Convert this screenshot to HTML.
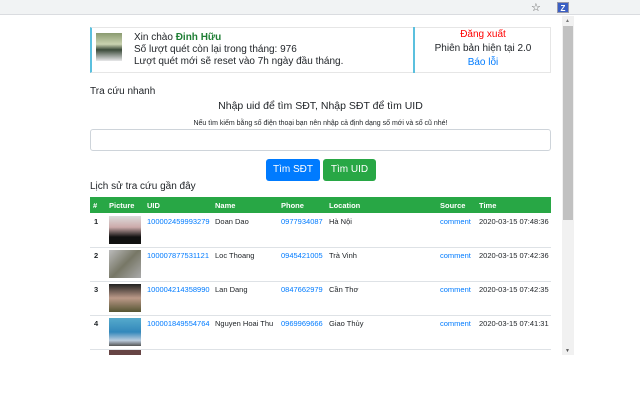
<!DOCTYPE html><html><head><meta charset="utf-8"><style>
*{margin:0;padding:0;box-sizing:border-box}
body{width:640px;height:400px;background:#fff;position:relative;overflow:hidden;font-family:"Liberation Sans","DejaVu Sans",sans-serif;color:#212529}
.a{position:absolute;white-space:nowrap}
.bar{left:0;top:0;width:640px;height:15px;background:#f1f3f4;border-bottom:1px solid #dadce0}
.blue{color:#007bff}
.th{font-weight:bold;color:#fff;font-size:7.5px}
.td{font-size:7.5px}
.row{left:90px;width:461px;height:1px;background:#dee2e6}
.img{width:32px;height:28px}
</style></head><body>
<div class="a bar"></div>
<div class="a" style="left:531px;top:1px;font-size:11px;color:#555">☆</div>
<div class="a" style="left:557px;top:2px;width:12px;height:11px;background:#3b5fc4;color:#fff;font-size:8px;font-weight:bold;text-align:center;line-height:11px;border:1px solid #99a">Z</div>
<!-- header card -->
<div class="a" style="left:90px;top:27px;width:461px;height:46px;border:1px solid #e6e6e6;border-left:2px solid #5bc0de"></div>
<div class="a" style="left:413px;top:27px;width:2px;height:46px;background:#5bc0de"></div>
<div class="a" style="left:96px;top:33px;width:26px;height:28px;background:linear-gradient(#8a9a70,#c9d2b0 40%,#3b4b3a 60%,#e8e8ea)"></div>
<div class="a" style="left:134px;top:32px;font-size:10px;line-height:12px">Xin chào <b style="color:#1e7e34">Đinh Hữu</b><br>Số lượt quét còn lại trong tháng: 976<br>Lượt quét mới sẽ reset vào 7h ngày đầu tháng.</div>
<div class="a" style="left:415px;top:28px;width:136px;text-align:center;font-size:10px;line-height:14px"><span style="color:#f00">Đăng xuất</span><br>Phiên bản hiện tại 2.0<br><span class="blue">Báo lỗi</span></div>
<div class="a" style="left:90px;top:86px;font-size:10px">Tra cứu nhanh</div>
<div class="a" style="left:90px;top:100px;width:461px;text-align:center;font-size:10.5px">Nhập uid để tìm SĐT, Nhập SĐT để tìm UID</div>
<div class="a" style="left:90px;top:120px;width:461px;text-align:center;font-size:7px">Nếu tìm kiếm bằng số điện thoại bạn nên nhập cả định dạng số mới và số cũ nhé!</div>
<div class="a" style="left:90px;top:129px;width:461px;height:22px;border:1px solid #ced4da;border-radius:3px"></div>
<div class="a" style="left:266px;top:159px;width:54px;height:22px;background:#007bff;border-radius:3px;color:#fff;font-size:10px;text-align:center;line-height:22px">Tìm SĐT</div>
<div class="a" style="left:323px;top:159px;width:53px;height:22px;background:#28a745;border-radius:3px;color:#fff;font-size:10px;text-align:center;line-height:22px">Tìm UID</div>
<div class="a" style="left:90px;top:181px;font-size:10px">Lịch sử tra cứu gần đây</div>
<div class="a" style="left:90px;top:197px;width:461px;height:16px;background:#28a745"></div>
<div class="a th" style="left:93px;top:201px">#</div>
<div class="a th" style="left:109px;top:201px">Picture</div>
<div class="a th" style="left:147px;top:201px">UID</div>
<div class="a th" style="left:215px;top:201px">Name</div>
<div class="a th" style="left:281px;top:201px">Phone</div>
<div class="a th" style="left:329px;top:201px">Location</div>
<div class="a th" style="left:440px;top:201px">Source</div>
<div class="a th" style="left:479px;top:201px">Time</div>

<div class="a img" style="left:109px;top:216px;background:linear-gradient(#ddd,#caa 40%,#111 75%)"></div>
<div class="a img" style="left:109px;top:250px;background:linear-gradient(135deg,#bbb,#776,#aaa)"></div>
<div class="a img" style="left:109px;top:284px;background:linear-gradient(#222,#b98 50%,#553)"></div>
<div class="a img" style="left:109px;top:318px;background:linear-gradient(#5ac,#38b 50%,#bcd 80%,#555)"></div>
<div class="a img" style="left:109px;top:350px;height:6px;background:#644"></div>
<div class="a row" style="top:247px"></div>
<div class="a row" style="top:281px"></div>
<div class="a row" style="top:315px"></div>
<div class="a row" style="top:349px"></div>

<div class="a td" style="left:94px;top:217px;font-weight:bold">1</div>
<div class="a td blue" style="left:147px;top:217px">100002459993279</div>
<div class="a td" style="left:215px;top:217px">Doan Dao</div>
<div class="a td blue" style="left:281px;top:217px">0977934087</div>
<div class="a td" style="left:329px;top:217px">Hà Nội</div>
<div class="a td blue" style="left:440px;top:217px">comment</div>
<div class="a td" style="left:479px;top:217px">2020-03-15 07:48:36</div>

<div class="a td" style="left:94px;top:251px;font-weight:bold">2</div>
<div class="a td blue" style="left:147px;top:251px">100007877531121</div>
<div class="a td" style="left:215px;top:251px">Loc Thoang</div>
<div class="a td blue" style="left:281px;top:251px">0945421005</div>
<div class="a td" style="left:329px;top:251px">Trà Vinh</div>
<div class="a td blue" style="left:440px;top:251px">comment</div>
<div class="a td" style="left:479px;top:251px">2020-03-15 07:42:36</div>

<div class="a td" style="left:94px;top:285px;font-weight:bold">3</div>
<div class="a td blue" style="left:147px;top:285px">100004214358990</div>
<div class="a td" style="left:215px;top:285px">Lan Dang</div>
<div class="a td blue" style="left:281px;top:285px">0847662979</div>
<div class="a td" style="left:329px;top:285px">Cần Thơ</div>
<div class="a td blue" style="left:440px;top:285px">comment</div>
<div class="a td" style="left:479px;top:285px">2020-03-15 07:42:35</div>

<div class="a td" style="left:94px;top:319px;font-weight:bold">4</div>
<div class="a td blue" style="left:147px;top:319px">100001849554764</div>
<div class="a td" style="left:215px;top:319px">Nguyen Hoai Thu</div>
<div class="a td blue" style="left:281px;top:319px">0969969666</div>
<div class="a td" style="left:329px;top:319px">Giao Thủy</div>
<div class="a td blue" style="left:440px;top:319px">comment</div>
<div class="a td" style="left:479px;top:319px">2020-03-15 07:41:31</div>

<div class="a" style="left:80px;top:355px;width:495px;height:45px;background:#fff"></div>
<!-- scrollbar -->
<div class="a" style="left:562px;top:16px;width:12px;height:339px;background:#f1f1f1"></div>
<div class="a" style="left:563px;top:26px;width:10px;height:194px;background:#c1c1c1"></div>
<div class="a" style="left:565px;top:18px;font-size:5px;color:#777">▲</div>
<div class="a" style="left:565px;top:348px;font-size:5px;color:#555">▼</div>
</body></html>
